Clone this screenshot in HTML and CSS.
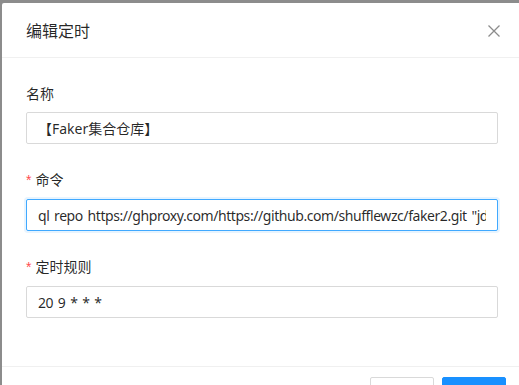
FILE: index.html
```html
<!DOCTYPE html>
<html lang="zh">
<head>
<meta charset="utf-8">
<title>编辑定时</title>
<link rel="stylesheet" href="styles.css">
</head>
<body>
<div class="mask">
  <div class="modal">
    <div class="modal-header">
      <div class="modal-title">编辑定时</div>
      <button class="modal-close" aria-label="Close">
        <svg width="12" height="12" viewBox="0 0 12 12"><path d="M0.5 0.5 L11.5 11.5 M11.5 0.5 L0.5 11.5" stroke="#8c8c8c" stroke-width="1.3" fill="none"/></svg>
      </button>
    </div>
    <div class="modal-body">
      <div class="form-item">
        <label class="form-label">名称</label>
        <input class="input" type="text" value="【Faker集合仓库】">
      </div>
      <div class="form-item">
        <label class="form-label required">命令</label>
        <input class="input input-latin focused" type="text" value="ql repo https://ghproxy.com/https://github.com/shufflewzc/faker2.git &quot;jd_|jx_|gua_|jddj_|getJDCookie&quot;">
      </div>
      <div class="form-item">
        <label class="form-label required">定时规则</label>
        <input class="input input-latin" type="text" value="20 9 * * *">
      </div>
    </div>
    <div class="modal-footer">
      <button class="btn">取 消</button>
      <button class="btn btn-primary">确 定</button>
    </div>
  </div>
</div>
</body>
</html>
```

FILE: styles.css
```css
html, body {
  margin: 0;
  padding: 0;
  height: 100%;
  overflow: hidden;
}
body {
  font-family: "Noto Sans", "Noto Sans CJK SC", sans-serif;
  font-size: 14px;
  color: rgba(0, 0, 0, 0.85);
}
.mask {
  background: #8c8c8c;
  height: 100%;
  padding: 3px 0 0 2px;
  box-sizing: border-box;
  overflow: hidden;
}
.modal {
  width: 520px;
  background: #fff;
  border-radius: 2px;
}
.modal-header {
  display: flex;
  align-items: center;
  justify-content: space-between;
  padding: 16px 24px;
  border-bottom: 1px solid #f0f0f0;
  height: 22px;
}
.modal-title {
  font-size: 16px;
  line-height: 22px;
  font-family: "Noto Sans CJK SC", sans-serif;
  color: rgba(0, 0, 0, 0.85);
}
.modal-close {
  border: 0;
  background: none;
  padding: 0;
  margin-right: -2px;
  margin-top: 2px;
  width: 12px;
  height: 12px;
  display: flex;
}
.modal-body {
  padding: 24px;
}
.form-item {
  margin-bottom: 24px;
}
.form-label {
  display: block;
  line-height: 22px;
  padding-bottom: 8px;
  font-family: "Noto Sans CJK SC", sans-serif;
  font-size: 14px;
  color: rgba(0, 0, 0, 0.85);
}
.form-label.required::before {
  content: "*";
  color: #ff4d4f;
  margin-right: 4px;
  font-family: "Liberation Sans", sans-serif;
  font-size: 14px;
}
.input {
  display: block;
  box-sizing: border-box;
  width: 100%;
  height: 32px;
  padding: 4px 11px;
  border: 1px solid #d9d9d9;
  border-radius: 2px;
  font-family: "Noto Sans", "Noto Sans CJK SC", sans-serif;
  font-size: 14px;
  color: rgba(0, 0, 0, 0.85);
  background: #fff;
  outline: none;
}
.input-latin {
  letter-spacing: -0.43px;
  word-spacing: 1.5px;
}
.input.focused {
  border-color: #40a9ff;
  box-shadow: 0 0 0 2px rgba(24, 144, 255, 0.1);
}
.modal-footer {
  display: flex;
  justify-content: flex-end;
  gap: 8px;
  padding: 10px 16px;
  border-top: 1px solid #f0f0f0;
}
.btn {
  height: 32px;
  padding: 4px 15px;
  font-size: 14px;
  font-family: "Noto Sans CJK SC", sans-serif;
  border: 1px solid #d9d9d9;
  border-radius: 2px;
  background: #fff;
  color: rgba(0, 0, 0, 0.85);
  width: 64px;
}
.btn-primary {
  background: #1890ff;
  border-color: #1890ff;
  color: #fff;
}
```
